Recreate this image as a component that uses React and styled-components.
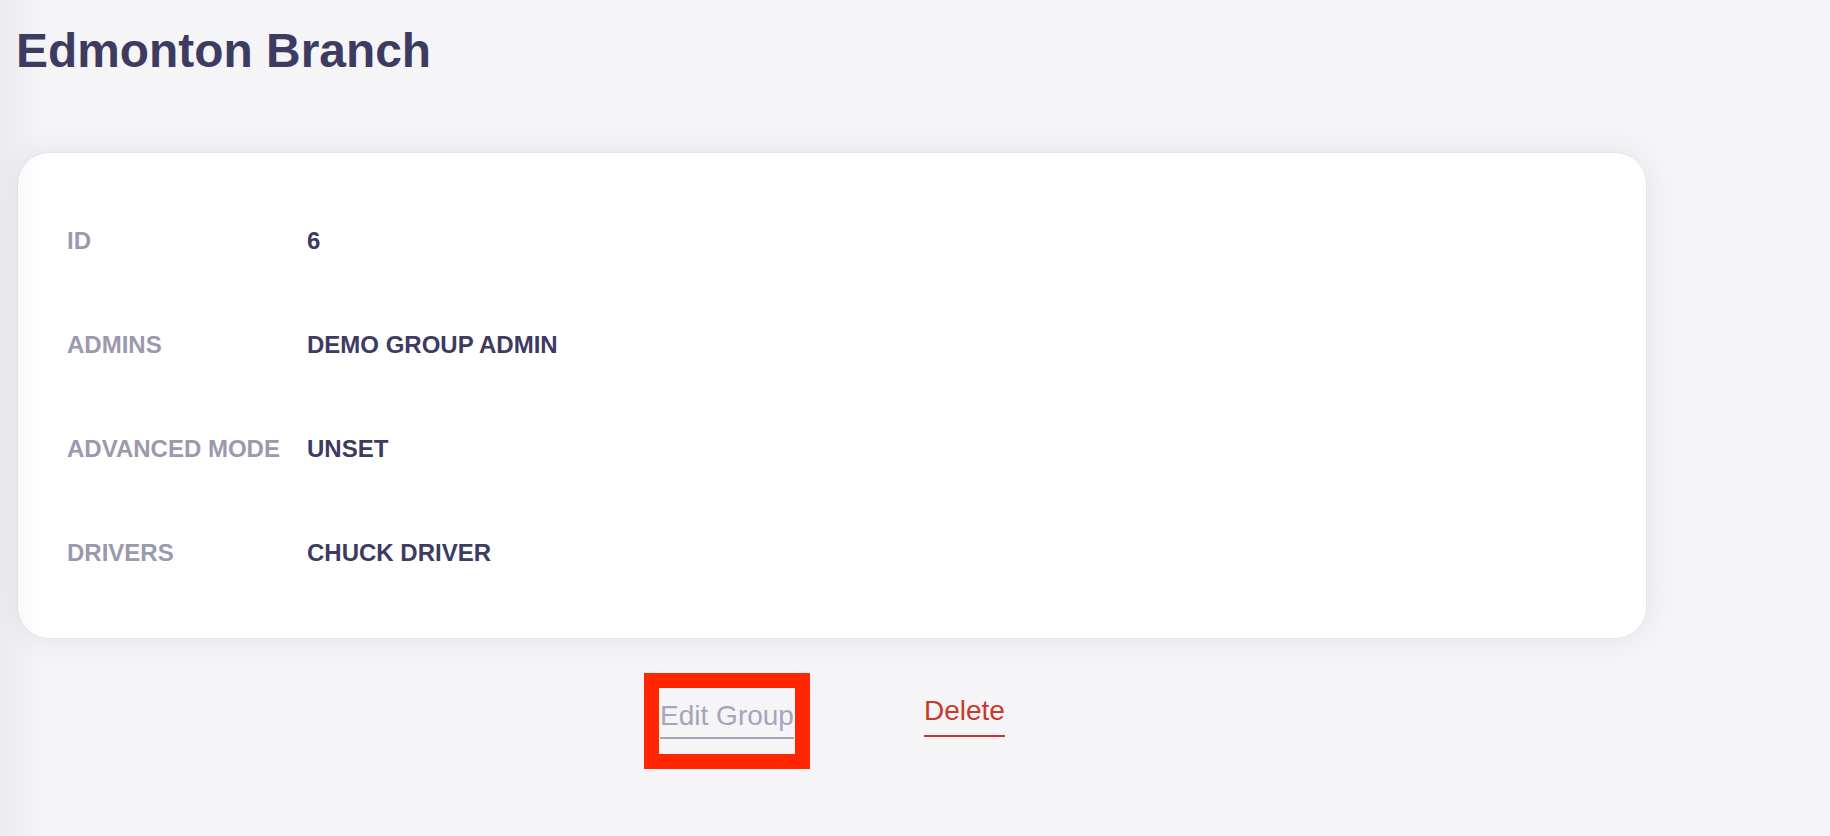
import React from 'react';
import styled, { createGlobalStyle } from 'styled-components';

const GlobalStyle = createGlobalStyle`
  html, body {
    margin: 0;
    padding: 0;
    background: #f5f5f8;
    font-family: "Liberation Sans", Arial, sans-serif;
  }
`

const Page = styled.div`
  position: relative;
  min-height: 836px;
  padding: 23px 0 0 16px;
  box-sizing: border-box;

  &::before {
    content: "";
    position: absolute;
    left: 0;
    top: 0;
    bottom: 0;
    width: 44px;
    background: linear-gradient(to right, rgba(60, 58, 94, 0.05), rgba(60, 58, 94, 0));
    pointer-events: none;
    z-index: 2;
  }
`

const Title = styled.h1`
  margin: 0;
  font-size: 47.9px;
  line-height: 55px;
  font-weight: 700;
  color: #3d3b5f;
`

const Card = styled.div`
  margin: 74px 0 0 1px;
  width: 1630px;
  box-sizing: border-box;
  padding: 36px 49px 33px;
  background: #ffffff;
  border-radius: 32px;
  border: 1px solid #e6e5ec;
  box-shadow: 0 0 30px rgba(60, 58, 94, 0.09);
`

const Row = styled.div`
  display: grid;
  grid-template-columns: 240px 1fr;
  align-items: center;
  height: 104px;
  font-size: 24px;
  font-weight: 700;
  text-transform: uppercase;
`

const Label = styled.div`
  color: #9b99ae;
`

const Value = styled.div`
  color: #3d3b5f;
`

const Actions = styled.div`
  display: flex;
  justify-content: center;
  align-items: flex-start;
  gap: 129px;
  width: 1632px;
  margin-top: 49px;
`

const ActionButton = styled.button`
  background: none;
  border: none;
  padding: ${p => (p.$highlight ? '12px 1px 15px' : '12px 0 15px')};
  margin-top: ${p => (p.$highlight ? '0' : '-5px')};
  font-family: inherit;
  font-size: 28px;
  line-height: 32px;
  color: ${p => (p.$danger ? '#c9382b' : '#a7a5b8')};
  cursor: pointer;
  outline: ${p => (p.$highlight ? '15px solid #ff2600' : 'none')};
`

const Underlined = styled.span`
  display: inline-block;
  padding-bottom: ${p => (p.$tight ? '8px' : '5px')};
  border-bottom: 2px solid currentColor;
`

const rows = [
  { label: 'ID', value: '6' },
  { label: 'Admins', value: 'Demo Group Admin' },
  { label: 'Advanced Mode', value: 'Unset' },
  { label: 'Drivers', value: 'Chuck Driver' },
];

function App() {
  return (
    <Page>
      <GlobalStyle />
      <Title>Edmonton Branch</Title>
      <Card>
        {rows.map(r => (
          <Row key={r.label}>
            <Label>{r.label}</Label>
            <Value>{r.value}</Value>
          </Row>
        ))}
      </Card>
      <Actions>
        <ActionButton $highlight>
          <Underlined>Edit Group</Underlined>
        </ActionButton>
        <ActionButton $danger>
          <Underlined $tight>Delete</Underlined>
        </ActionButton>
      </Actions>
    </Page>
  );
}

export default App;
